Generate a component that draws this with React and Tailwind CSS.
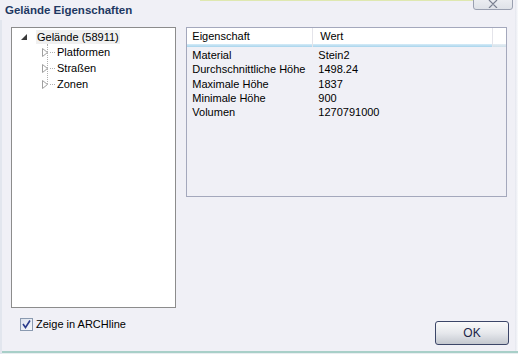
import React from "react";

const font = { fontFamily: '"Liberation Sans", Arial, sans-serif' };

export default function App() {
  const rows = [
    ["Material", "Stein2"],
    ["Durchschnittliche Höhe", "1498.24"],
    ["Maximale Höhe", "1837"],
    ["Minimale Höhe", "900"],
    ["Volumen", "1270791000"],
  ];
  return (
    <div
      className="relative flex h-[354px] w-[518px] flex-col overflow-hidden bg-[#f0f0f6] text-[11px] text-black"
      style={font}
    >
      {/* top line from window behind */}
      <div className="absolute left-[200px] top-0 h-[1px] w-[273px] bg-[#dfe8b0]" />
      {/* close button */}
      <div className="absolute right-[5px] top-[-8px] flex h-[18px] w-[40px] items-end justify-center rounded-[3px] border border-[#9aa0b0] bg-gradient-to-b from-[#f4f5f8] to-[#dfe2e8] pb-[1px]">
        <svg width="10" height="8" viewBox="0 0 10 8">
          <path d="M1 0 L5 4 L9 0 M1 8 L5 4 L9 8" fill="none" stroke="#7a8090" strokeWidth="1.2" />
        </svg>
      </div>
      {/* window edges */}
      <div className="absolute bottom-0 right-0 top-0 w-[3px] bg-gradient-to-r from-[#e4e6ee] to-[#fafbfd]" />
      <div className="absolute bottom-[1px] left-0 right-0 h-[2px] bg-[#a8cfc8]" />
      <div className="absolute bottom-0 left-0 right-0 h-[1px] bg-[#e8eef0]" />
      <div className="absolute bottom-0 left-0 top-[20px] w-[2px] bg-[#e2e6ee]" />

      {/* title */}
      <div className="flex h-[27px] items-start px-[5px] pt-[3px]">
        <span className="text-[11.5px] font-bold leading-[14px] text-[#1e3862]">
          Gelände Eigenschaften
        </span>
      </div>

      <div className="flex flex-1 px-[11px]">
        {/* left column */}
        <div className="flex w-[166px] flex-col">
          <div className="h-[281px] border border-[#8c8c8c] bg-white pt-[2px]">
            <div className="relative">
              <div className="flex h-[14px] items-center">
                <svg width="6" height="6" className="ml-[9px]" viewBox="0 0 6 6">
                  <polygon points="6,0 6,6 0,6" fill="#3a3a3a" />
                </svg>
                <span className="ml-[9px] bg-[#f0f0f0] px-[1px] leading-[14px]">
                  Gelände (58911)
                </span>
              </div>
              {/* dotted vertical line */}
              <div className="absolute left-[35px] top-[14px] h-[40px] border-l border-dotted border-[#b0b0b0]" />
              {["Platformen", "Straßen", "Zonen"].map((t) => (
                <div key={t} className="relative flex h-[16px] items-center">
                  <svg width="6" height="9" className="ml-[30px]" viewBox="0 0 6 9">
                    <polygon points="0.5,0.5 5.5,4.5 0.5,8.5" fill="white" stroke="#a0a0a0" />
                  </svg>
                  <div className="ml-[2px] w-[5px] border-t border-dotted border-[#b0b0b0]" />
                  <span className="ml-[2px] leading-[14px]">{t}</span>
                </div>
              ))}
            </div>
          </div>
          <div className="mt-[8px] flex items-center">
            <div className="ml-[9px] flex h-[13px] w-[13px] items-center justify-center border border-[#8a9ab0] bg-gradient-to-br from-[#dde3ee] to-[#f6f8fb]">
              <svg width="9" height="9" viewBox="0 0 9 9">
                <path d="M1 4 L3.5 7.5 L8 0.5" fill="none" stroke="#2a3c8c" strokeWidth="1.6" />
              </svg>
            </div>
            <span className="ml-[3px] text-[11px]">Zeige in ARCHline</span>
          </div>
        </div>

        {/* right column */}
        <div className="ml-[10px] flex w-[322px] flex-col">
          <div className="h-[170px] border border-[#a4a8bc] bg-[#f0f0f6]">
            <div className="flex h-[19px] bg-white">
              <div className="flex w-[125px] flex-col">
                <div className="flex h-[16px] items-center pl-[5px]">Eigenschaft</div>
                <div className="h-[3px] bg-gradient-to-b from-[#d6ecf8] to-[#a8d4ec]" />
              </div>
              <div className="w-[1px] bg-[#e4e4ea]" />
              <div className="flex w-[179px] flex-col">
                <div className="flex h-[16px] items-center pl-[7px]">Wert</div>
                <div className="h-[3px] bg-gradient-to-b from-[#d6ecf8] to-[#a8d4ec]" />
              </div>
              <div className="w-[1px] bg-[#e4e4ea]" />
              <div className="flex flex-1 flex-col">
                <div className="h-[16px]" />
                <div className="h-[3px] bg-gradient-to-b from-[#e6eef4] to-[#d0e0ea]" />
              </div>
            </div>
            <div className="pt-[1px]">
              {rows.map(([k, v]) => (
                <div key={k} className="flex h-[14.25px] items-center leading-[14px]">
                  <span className="w-[126px] pl-[5px]">{k}</span>
                  <span className="pl-[5px]">{v}</span>
                </div>
              ))}
            </div>
          </div>
          <div className="flex flex-1 items-start justify-end pt-[124px]">
            <div className="mr-[-2px] flex h-[24px] w-[74px] items-center justify-center rounded-[3px] border border-[#3c4668] bg-gradient-to-b from-[#fafafa] via-[#e6e8ec] to-[#c4c8d0] text-[12px] text-[#1c2448]">
              OK
            </div>
          </div>
        </div>
      </div>
    </div>
  );
}
